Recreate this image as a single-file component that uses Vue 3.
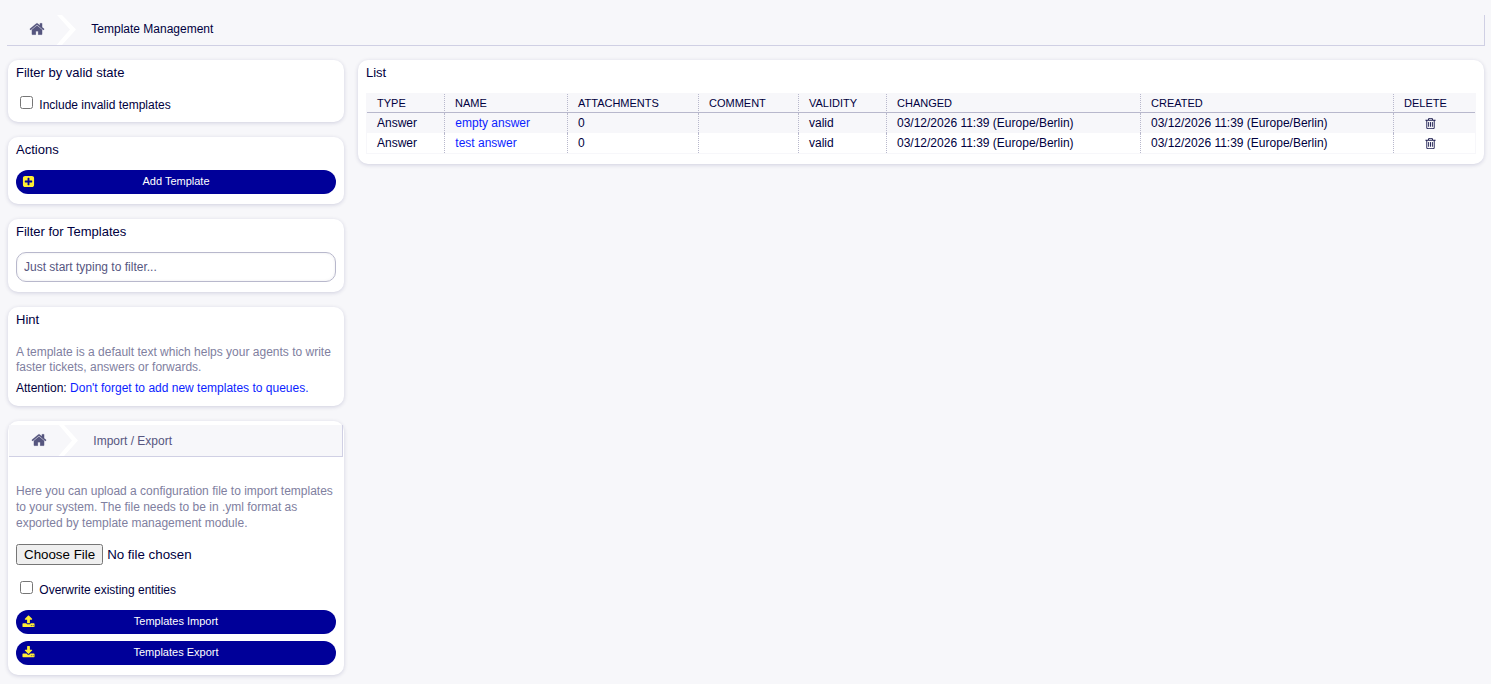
<script setup>
import { ref } from 'vue'

const includeInvalid = ref(false)
const overwrite = ref(false)
const filterText = ref('')

const columns = ['Type', 'Name', 'Attachments', 'Comment', 'Validity', 'Changed', 'Created', 'Delete']
const colWidths = [77, 123, 131, 100, 88, 254, 253, 82]

const templates = ref([
  {
    id: 1,
    type: 'Answer',
    name: 'empty answer',
    attachments: 0,
    comment: '',
    validity: 'valid',
    changed: '03/12/2026 11:39 (Europe/Berlin)',
    created: '03/12/2026 11:39 (Europe/Berlin)'
  },
  {
    id: 2,
    type: 'Answer',
    name: 'test answer',
    attachments: 0,
    comment: '',
    validity: 'valid',
    changed: '03/12/2026 11:39 (Europe/Berlin)',
    created: '03/12/2026 11:39 (Europe/Berlin)'
  }
])

const icons = {
  home: 'M1472 992v480q0 26-19 45t-45 19h-384v-384h-256v384h-384q-26 0-45-19t-19-45v-480q0-1 .5-3t.5-3l575-474 575 474q1 2 1 6zm223-69l-62 74q-8 9-21 11h-3q-13 0-21-7l-692-577-692 577q-12 8-24 7-13-2-21-11l-62-74q-8-10-7-23.5t11-21.5l719-599q32-26 76-26t76 26l244 204v-195q0-14 9-23t23-9h192q14 0 23 9t9 23v408l219 182q10 8 11 21.5t-7 23.5z',
  trash: 'M704 736v576q0 14-9 23t-23 9h-64q-14 0-23-9t-9-23v-576q0-14 9-23t23-9h64q14 0 23 9t9 23zm256 0v576q0 14-9 23t-23 9h-64q-14 0-23-9t-9-23v-576q0-14 9-23t23-9h64q14 0 23 9t9 23zm256 0v576q0 14-9 23t-23 9h-64q-14 0-23-9t-9-23v-576q0-14 9-23t23-9h64q14 0 23 9t9 23zm128 724v-948h-896v948q0 22 7 40.5t14.5 27 10.5 8.5h832q3 0 10.5-8.5t14.5-27 7-40.5zm-672-1076h448l-48-117q-7-9-17-11h-317q-10 2-17 11zm928 32v64q0 14-9 23t-23 9h-96v948q0 83-47 143.5t-113 60.5h-832q-66 0-113-58.5t-47-141.5v-952h-96q-14 0-23-9t-9-23v-64q0-14 9-23t23-9h309l70-167q15-37 54-63t79-26h320q40 0 79 26t54 63l70 167h309q14 0 23 9t9 23z',
  plus: 'M1408 960v-128q0-26-19-45t-45-19h-320v-320q0-26-19-45t-45-19h-128q-26 0-45 19t-19 45v320h-320q-26 0-45 19t-19 45v128q0 26 19 45t45 19h320v320q0 26 19 45t45 19h128q26 0 45-19t19-45v-320h320q26 0 45-19t19-45zm256-544v960q0 119-84.5 203.5t-203.5 84.5h-960q-119 0-203.5-84.5t-84.5-203.5v-960q0-119 84.5-203.5t203.5-84.5h960q119 0 203.5 84.5t84.5 203.5z',
  upload: 'M1344 1472q0-26-19-45t-45-19-45 19-19 45 19 45 45 19 45-19 19-45zm256 0q0-26-19-45t-45-19-45 19-19 45 19 45 45 19 45-19 19-45zm128-224v320q0 40-28 68t-68 28h-1472q-40 0-68-28t-28-68v-320q0-40 28-68t68-28h427q21 56 70.5 92t110.5 36h256q61 0 110.5-36t70.5-92h427q40 0 68 28t28 68zm-325-648q-17 40-59 40h-256v448q0 26-19 45t-45 19h-256q-26 0-45-19t-19-45v-448h-256q-42 0-59-40-17-39 14-69l448-448q18-19 45-19t45 19l448 448q31 30 14 69z',
  download: 'M1344 1344q0-26-19-45t-45-19-45 19-19 45 19 45 45 19 45-19 19-45zm256 0q0-26-19-45t-45-19-45 19-19 45 19 45 45 19 45-19 19-45zm128-224v320q0 40-28 68t-68 28h-1472q-40 0-68-28t-28-68v-320q0-40 28-68t68-28h465l135 136q58 56 136 56t136-56l136-136h464q40 0 68 28t28 68zm-325-569q17 41-14 70l-448 448q-18 19-45 19t-45-19l-448-448q-31-29-14-70 17-39 59-39h256v-448q0-26 19-45t45-19h256q26 0 45 19t19 45v448h256q42 0 59 39z'
}
</script>

<template>
  <div class="page">
    <nav class="breadcrumb">
      <svg class="home" viewBox="0 0 1792 1792"><path :d="icons.home" /></svg>
      <svg class="chevron" viewBox="0 0 20 30"><path d="M1 0h5l14 14.5L6 30H0.5l13.5-15.5z" /></svg>
      <span>Template Management</span>
    </nav>

    <div class="content">
      <aside class="sidebar">
        <section class="card card-valid">
          <h2>Filter by valid state</h2>
          <label class="check">
            <input v-model="includeInvalid" type="checkbox">
            <span>Include invalid templates</span>
          </label>
        </section>

        <section class="card card-actions">
          <h2>Actions</h2>
          <button class="btn" type="button">
            <svg viewBox="0 0 1792 1792"><path :d="icons.plus" /></svg>
            <span>Add Template</span>
          </button>
        </section>

        <section class="card card-filter">
          <h2>Filter for Templates</h2>
          <input v-model="filterText" class="filter-input" type="text" placeholder="Just start typing to filter...">
        </section>

        <section class="card card-hint">
          <h2>Hint</h2>
          <p class="hint">A template is a default text which helps your agents to write faster tickets, answers or forwards.</p>
          <p class="attention">Attention: <a>Don't forget to add new templates to queues.</a></p>
        </section>

        <section class="card card-import">
          <nav class="breadcrumb inner">
            <svg class="home" viewBox="0 0 1792 1792"><path :d="icons.home" /></svg>
            <svg class="chevron" viewBox="0 0 20 31"><path d="M1 0h5l14 15.5L6 31H0.5l13.5-15.5z" /></svg>
            <span>Import / Export</span>
          </nav>
          <div class="import-body">
            <p class="hint">Here you can upload a configuration file to import templates to your system. The file needs to be in .yml format as exported by template management module.</p>
            <input class="file" type="file">
            <label class="check">
              <input v-model="overwrite" type="checkbox">
              <span>Overwrite existing entities</span>
            </label>
            <button class="btn" type="button">
              <svg class="wide" viewBox="0 0 1792 1792"><path :d="icons.upload" /></svg>
              <span>Templates Import</span>
            </button>
            <button class="btn" type="button">
              <svg class="wide" viewBox="0 0 1792 1792"><path :d="icons.download" /></svg>
              <span>Templates Export</span>
            </button>
          </div>
        </section>
      </aside>

      <main class="card list">
        <h2>List</h2>
        <table>
          <colgroup>
            <col v-for="(w, i) in colWidths" :key="i" :style="{ width: w + 'px' }">
          </colgroup>
          <thead>
            <tr>
              <th v-for="col in columns" :key="col">{{ col }}</th>
            </tr>
          </thead>
          <tbody>
            <tr v-for="item in templates" :key="item.id">
              <td>{{ item.type }}</td>
              <td><a>{{ item.name }}</a></td>
              <td>{{ item.attachments }}</td>
              <td>{{ item.comment }}</td>
              <td>{{ item.validity }}</td>
              <td>{{ item.changed }}</td>
              <td>{{ item.created }}</td>
              <td class="delete-cell">
                <svg viewBox="0 0 1792 1792"><path :d="icons.trash" /></svg>
              </td>
            </tr>
          </tbody>
        </table>
      </main>
    </div>
  </div>
</template>

<style>
body {
  background: #f7f7fa;
}
</style>

<style scoped>
.page {
  box-sizing: border-box;
  width: 1491px;
  height: 684px;
  padding: 15px 6px 0 7px;
  background: #f7f7fa;
  color: #000040;
  font-family: "Liberation Sans", Arial, sans-serif;
  font-size: 12px;
}

.breadcrumb {
  display: flex;
  box-sizing: border-box;
  height: 31px;
  padding-left: 22px;
  border-right: 1px solid #d0d0e4;
  border-bottom: 1px solid #d0d0e4;
  background: #f7f7fa;
  line-height: 28px;
}

.breadcrumb span {
  padding-left: 0.3px;
}

.home {
  width: 16px;
  height: 16px;
  margin-top: 6px;
  fill: #56567f;
  stroke: #56567f;
  stroke-width: 20px;
}

.chevron {
  width: 20px;
  height: 30px;
  margin: 0 15px 0 11px;
  fill: #fff;
}

.content {
  display: flex;
  gap: 14px;
  padding: 14px 1px 0;
}

.sidebar {
  display: flex;
  flex-direction: column;
  gap: 15px;
  width: 336px;
}

.card {
  box-sizing: border-box;
  padding: 0 8px;
  border-radius: 10px;
  background: #fff;
  box-shadow: 0 1px 4px rgba(0, 0, 80, 0.16);
}

.card h2 {
  margin: 0;
  padding-top: 5px;
  font-size: 13px;
  font-weight: normal;
  line-height: 16px;
}

.card-valid {
  height: 62px;
}

.card-actions {
  height: 67px;
}

.card-filter {
  height: 73px;
}

.card-hint {
  height: 99px;
}

.card-import {
  height: 254px;
  padding: 4px 1px 0;
}

.check {
  display: flex;
  align-items: flex-start;
  height: 20px;
  line-height: 16px;
}

.card-valid .check {
  margin-top: 15px;
}

.check input {
  width: 13px;
  height: 13px;
  margin: 0 6.3px 0 4px;
}

.check span {
  padding-top: 1px;
}

.btn {
  display: flex;
  align-items: center;
  width: 320px;
  height: 24px;
  padding: 0 19px 1px 6px;
  border: 0;
  border-radius: 12px;
  background: #000099;
  color: #fff;
  font-family: inherit;
  font-size: 11px;
}

.btn svg {
  width: 13px;
  height: 13px;
  fill: #ffee33;
}

.btn svg.wide {
  margin-bottom: 1px;
}

.btn span {
  flex: 1;
  padding-bottom: 1px;
  text-align: center;
}

.card-actions .btn {
  margin-top: 12px;
}

.filter-input {
  box-sizing: border-box;
  width: 320px;
  height: 30px;
  margin: 12px 0 0;
  padding: 0 7px;
  border: 1px solid #b8b8cc;
  border-radius: 10px;
  background: #fff;
  box-shadow: inset 0 0 3px rgba(0, 0, 60, 0.08);
  color: #000040;
  font-family: inherit;
  font-size: 12px;
}

.filter-input::placeholder {
  color: #56567f;
}

.hint {
  margin: 0;
  color: #8080a0;
}

.card-hint .hint {
  padding-top: 17px;
  line-height: 15px;
}

.attention {
  margin: 6px 0 0;
  line-height: 15px;
}

a {
  color: #0b1eff;
  text-decoration: none;
}

td a {
  padding-left: 0.3px;
}

.inner {
  height: 32px;
  color: #56567f;
  line-height: 32px;
}

.inner .home {
  margin-top: 7px;
}

.inner .chevron {
  height: 31px;
}

.import-body {
  padding: 26px 7px 0;
}

.import-body .hint {
  line-height: 16px;
}

.file {
  display: block;
  height: 21px;
  margin-top: 13px;
  font-family: inherit;
  font-size: 13.3333px;
}

.import-body .check {
  margin: 16px 0 9px;
}

.import-body .btn + .btn {
  margin-top: 7px;
}

.list {
  flex: 1;
  height: 104px;
}

table {
  width: 1110px;
  margin-top: 12px;
  border: 1px solid #f7f7fa;
  border-spacing: 0;
  table-layout: fixed;
}

th,
td {
  box-sizing: border-box;
  height: 20px;
  padding: 0 10px;
  font-weight: normal;
  line-height: 19px;
  text-align: left;
  white-space: nowrap;
}

th {
  height: 19px;
  border-bottom: 1px solid #b8b8cc;
  background: #f7f7fa;
  font-size: 11px;
  line-height: 18px;
  text-transform: uppercase;
}

th + th,
td + td {
  border-left: 1px dotted #b8b8cc;
}

tbody tr:nth-child(odd) {
  background: #f7f7fa;
}

td.delete-cell {
  padding: 0 0 0 30px;
}

.delete-cell svg {
  display: block;
  width: 13px;
  height: 13px;
  margin-top: 1px;
  fill: #1c1c50;
}
</style>
